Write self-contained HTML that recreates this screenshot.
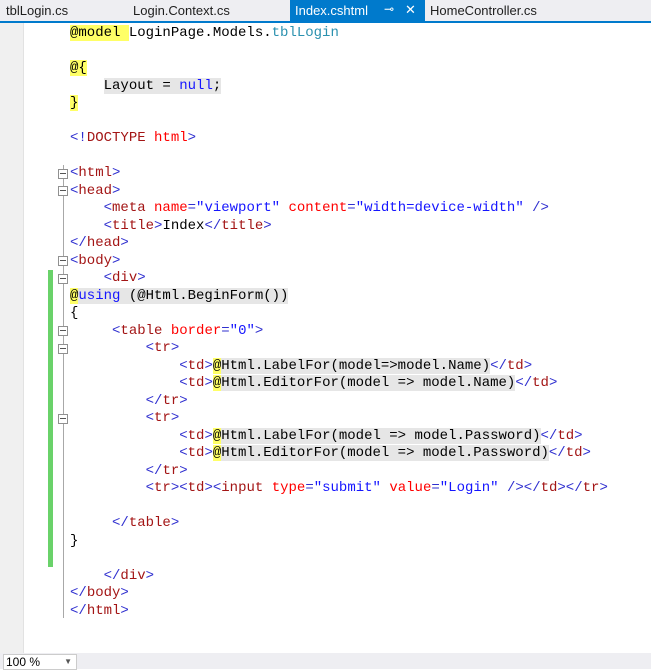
<!DOCTYPE html>
<html><head><style>
body{margin:0;width:651px;height:669px;overflow:hidden;background:#fff;position:relative;font-family:"Liberation Sans",sans-serif}
#tabs{position:absolute;left:0;top:0;width:651px;height:21px;background:#eeeef2;border-bottom:2px solid #007acc;font-size:13px;color:#1e1e1e}
.tab{position:absolute;top:3px}
#act{position:absolute;left:290px;top:0;width:135px;height:21px;background:#007acc;color:#fff}
#gut{position:absolute;left:0;top:23px;width:23px;height:630px;background:#f0f0f0;border-right:1px solid #e2e2e2}
#green{position:absolute;left:48px;top:270px;width:5px;height:297px;background:#6ad26a}
#fold{position:absolute;left:63px;top:165px;width:1px;height:453px;background:#a8a8a8}
.fb{position:absolute;left:58px;width:8px;height:8px;border:1px solid #909090;background:#fff}
.fb:after{content:"";position:absolute;left:1px;top:3px;width:6px;height:1px;background:#555}
pre{position:absolute;left:70px;top:25px;margin:0;font:14px/17.5px "Liberation Mono",monospace;color:#000}
.t{color:#2f2fcf}.n{color:#a31515}.a{color:#f00}.v{color:#1515ff}.k{color:#1515ff}.c{color:#2b91af}
.y{background:#ffff66}.g{background:#e6e6e6}
#status{position:absolute;left:0;top:653px;width:651px;height:16px;background:#eeeef2}
#zoom{position:absolute;left:3px;top:654px;width:70px;height:14px;background:#fff;border:1px solid #ccc;font-size:12px;line-height:14px;padding-left:2px}
</style></head><body>
<div id="tabs">
<span class="tab" style="left:6px">tblLogin.cs</span>
<span class="tab" style="left:133px">Login.Context.cs</span>
<div id="act"><span style="position:absolute;left:5px;top:3px">Index.cshtml</span><span style="position:absolute;left:94px;top:2px;font-size:12px">⊸</span><span style="position:absolute;left:115px;top:2px">✕</span></div>
<span class="tab" style="left:430px">HomeController.cs</span>
</div>
<div id="gut"></div>
<div id="green"></div>
<div id="fold"></div>
<div class="fb" style="top:169px"></div>
<div class="fb" style="top:186px"></div>
<div class="fb" style="top:256px"></div>
<div class="fb" style="top:274px"></div>
<div class="fb" style="top:326px"></div>
<div class="fb" style="top:344px"></div>
<div class="fb" style="top:414px"></div>
<pre><span class="y">@model </span>LoginPage.Models.<span class="c">tblLogin</span>

<span class="y">@{</span>
    <span class="g">Layout = <span class="k">null</span>;</span>
<span class="y">}</span>

<span class="t">&lt;!</span><span class="n">DOCTYPE</span> <span class="a">html</span><span class="t">&gt;</span>

<span class="t">&lt;</span><span class="n">html</span><span class="t">&gt;</span>
<span class="t">&lt;</span><span class="n">head</span><span class="t">&gt;</span>
    <span class="t">&lt;</span><span class="n">meta</span> <span class="a">name</span><span class="t">=</span><span class="v">"viewport"</span> <span class="a">content</span><span class="t">=</span><span class="v">"width=device-width"</span> <span class="t">/&gt;</span>
    <span class="t">&lt;</span><span class="n">title</span><span class="t">&gt;</span>Index<span class="t">&lt;/</span><span class="n">title</span><span class="t">&gt;</span>
<span class="t">&lt;/</span><span class="n">head</span><span class="t">&gt;</span>
<span class="t">&lt;</span><span class="n">body</span><span class="t">&gt;</span>
    <span class="t">&lt;</span><span class="n">div</span><span class="t">&gt;</span>
<span class="g"><span class="y">@</span><span class="k">using</span> (@Html.BeginForm())</span>
{
     <span class="t">&lt;</span><span class="n">table</span> <span class="a">border</span><span class="t">=</span><span class="v">"0"</span><span class="t">&gt;</span>
         <span class="t">&lt;</span><span class="n">tr</span><span class="t">&gt;</span>
             <span class="t">&lt;</span><span class="n">td</span><span class="t">&gt;</span><span class="y">@</span><span class="g">Html.LabelFor(model=&gt;model.Name)</span><span class="t">&lt;/</span><span class="n">td</span><span class="t">&gt;</span>
             <span class="t">&lt;</span><span class="n">td</span><span class="t">&gt;</span><span class="y">@</span><span class="g">Html.EditorFor(model =&gt; model.Name)</span><span class="t">&lt;/</span><span class="n">td</span><span class="t">&gt;</span>
         <span class="t">&lt;/</span><span class="n">tr</span><span class="t">&gt;</span>
         <span class="t">&lt;</span><span class="n">tr</span><span class="t">&gt;</span>
             <span class="t">&lt;</span><span class="n">td</span><span class="t">&gt;</span><span class="y">@</span><span class="g">Html.LabelFor(model =&gt; model.Password)</span><span class="t">&lt;/</span><span class="n">td</span><span class="t">&gt;</span>
             <span class="t">&lt;</span><span class="n">td</span><span class="t">&gt;</span><span class="y">@</span><span class="g">Html.EditorFor(model =&gt; model.Password)</span><span class="t">&lt;/</span><span class="n">td</span><span class="t">&gt;</span>
         <span class="t">&lt;/</span><span class="n">tr</span><span class="t">&gt;</span>
         <span class="t">&lt;</span><span class="n">tr</span><span class="t">&gt;&lt;</span><span class="n">td</span><span class="t">&gt;&lt;</span><span class="n">input</span> <span class="a">type</span><span class="t">=</span><span class="v">"submit"</span> <span class="a">value</span><span class="t">=</span><span class="v">"Login"</span> <span class="t">/&gt;&lt;/</span><span class="n">td</span><span class="t">&gt;&lt;/</span><span class="n">tr</span><span class="t">&gt;</span>

     <span class="t">&lt;/</span><span class="n">table</span><span class="t">&gt;</span>
}

    <span class="t">&lt;/</span><span class="n">div</span><span class="t">&gt;</span>
<span class="t">&lt;/</span><span class="n">body</span><span class="t">&gt;</span>
<span class="t">&lt;/</span><span class="n">html</span><span class="t">&gt;</span></pre>
<div id="status"></div>
<div id="zoom">100 %<span style="position:absolute;right:4px;top:0;font-size:8px;color:#555">▼</span></div>
</body></html>
